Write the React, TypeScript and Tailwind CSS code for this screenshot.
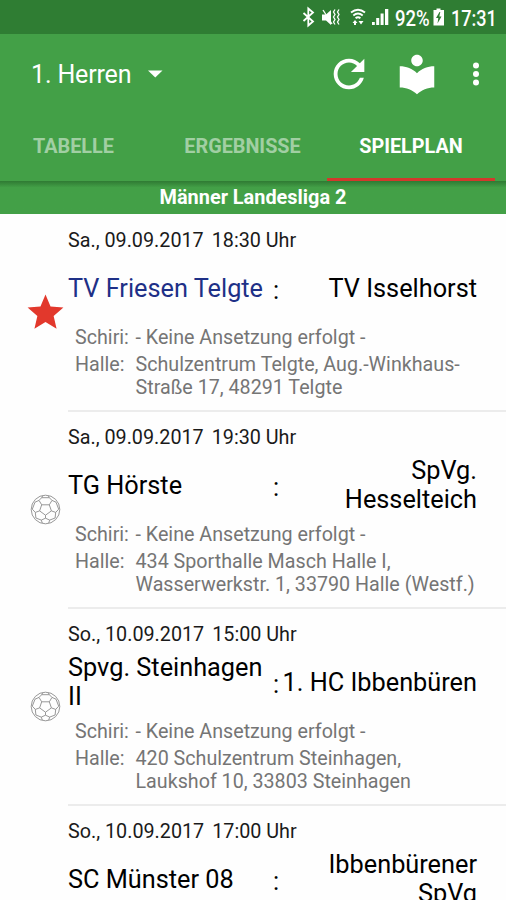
type Match = {
  date: string;
  time: string;
  home: string;
  away: string;
  hall?: string[];
  favorite?: boolean;
};

const matches: Match[] = [
  {
    date: "Sa., 09.09.2017",
    time: "18:30 Uhr",
    home: "TV Friesen Telgte",
    away: "TV Isselhorst",
    hall: ["Schulzentrum Telgte, Aug.-Winkhaus-", "Straße 17, 48291 Telgte"],
    favorite: true,
  },
  {
    date: "Sa., 09.09.2017",
    time: "19:30 Uhr",
    home: "TG Hörste",
    away: "SpVg. Hesselteich",
    hall: ["434 Sporthalle Masch Halle I,", "Wasserwerkstr. 1, 33790 Halle (Westf.)"],
  },
  {
    date: "So., 10.09.2017",
    time: "15:00 Uhr",
    home: "Spvg. Steinhagen II",
    away: "1. HC Ibbenbüren",
    hall: ["420 Schulzentrum Steinhagen,", "Laukshof 10, 33803 Steinhagen"],
  },
  {
    date: "So., 10.09.2017",
    time: "17:00 Uhr",
    home: "SC Münster 08",
    away: "Ibbenbürener SpVg",
  },
];

function Star() {
  return (
    <svg className="size-[43px] shrink-0" viewBox="0 0 24 24" fill="#e2382c">
      <path d="M12 17.27 18.18 21l-1.64-7.03L22 9.24l-7.19-.61L12 2 9.19 8.63 2 9.24l5.46 4.73L5.82 21z" />
    </svg>
  );
}

function Ball() {
  return (
    <svg className="size-[31px] shrink-0" viewBox="0 0 31 31" fill="none" stroke="#8c8c8c" strokeWidth="0.9">
      <circle cx="15.5" cy="15.5" r="14.3" />
      <path d="M11.7 10.8h7.6l2.1 6.1-5.9 4.3-5.9-4.3z" />
      <path d="M11.7 10.8 9 6.4l2.7-2.7h7.6L22 6.4l-2.7 4.4M9 6.4 5 8.2M22 6.4l4 1.8M9.600 16.900l-4.300 1.500-3-3.200L5 8.200M21.400 16.900l4.300 1.500 3-3.200L26 8.200M5.300 18.400l.6 5.600 5.400 2.100 4.200-1.900 4.200 1.900 5.400-2.100.6-5.600M15.500 21.200v3M11.300 26.100l1 3M19.700 26.100l-1 3M11.700 3.700l1-2M19.300 3.700l-1-2" />
    </svg>
  );
}

function StatusBar() {
  return (
    <div className="flex h-[34px] items-center bg-[#2f7d33] pl-[302px] text-white">
      <svg className="h-[36px] w-[93px] shrink-0" viewBox="302 0 93 36" fill="none" stroke="#fff">
        <path d="M303.500 14l9.500 8.500-4.700 4v-17l4.700 4-9.500 8.500" strokeWidth="1.800" />
        <path d="M322 15.500h4l5-4.500v15l-5-4.500h-4z" fill="#fff" stroke="none" />
        <path d="M323 11l9 14" strokeWidth="1.300" />
        <path d="M335 10.500l-1.500 2.500 1.500 2.500-1.500 2.500 1.500 2.500-1.500 2.500 1.500 2.500M339 10.500l-1.500 2.500 1.500 2.500-1.500 2.500 1.500 2.500-1.500 2.500 1.500 2.500" strokeWidth="1.300" />
        <path d="M351 13.500q7-5.500 14 0M353.300 16.500q4.700-3.800 9.400 0M355.600 19.300q2.400-2 4.800 0" strokeWidth="1.900" />
        <path d="M352.500 24l2.500-3 2.500 3zM358.500 22l2.500 3.500 2.500-3.500zM354 24h2v2h-2z" fill="#fff" stroke="none" />
        <path d="M372 26v-3h2.800v3zM376.200 26v-7h3v7zM380.600 26V14.500h3V26zM385 26V10h3.300v16z" fill="#fff" stroke="none" />
      </svg>
      <span className="mt-[4px] w-[38px] origin-left scale-x-[0.86] whitespace-nowrap text-[21.500px] font-medium leading-[36px]">92%</span>
      <svg className="h-[36px] w-[12px] shrink-0" viewBox="433 0 12 36">
        <path d="M433.500 11h3V9.500h4V11h3.500v15.500h-10.500z" fill="#fff" />
        <path d="M439.500 13l-3.500 6h2.300l-.8 5.500 4-7h-2.200l1-4.500z" fill="#2f7d33" />
      </svg>
      <span className="ml-[6px] mt-[4px] origin-left scale-x-[0.84] whitespace-nowrap text-[21.500px] font-medium leading-[36px]">17:31</span>
    </div>
  );
}

function AppBar() {
  return (
    <header className="bg-[#43a047] text-white">
      <div className="flex h-[79px] items-center pl-[31px] pr-[10px]">
        <span className="w-[101px] whitespace-nowrap pt-[3px] text-[25px] tracking-[-0.15px]">1. Herren</span>
        <svg className="ml-[16px] mt-[1px] h-[8px] w-[15px]" viewBox="0 0 15 8" fill="#fff">
          <path d="M0 .5h14.500L7.250 7.500z" />
        </svg>
        <svg className="ml-auto mt-[1px] size-[46px]" viewBox="0 0 24 24" fill="#fff">
          <path d="M17.650 6.350C16.200 4.900 14.210 4 12 4c-4.420 0-7.990 3.580-7.990 8s3.570 8 7.990 8c3.730 0 6.840-2.550 7.730-6h-2.080c-.82 2.330-3.040 4-5.650 4-3.310 0-6-2.690-6-6s2.690-6 6-6c1.660 0 3.140.69 4.220 1.780L13 11h7V4l-2.350 2.350z" />
        </svg>
        <svg className="ml-[22px] size-[46px]" viewBox="0 0 24 24" fill="#fff">
          <path d="M12 11.550C9.640 9.350 6.480 8 3 8v11c3.480 0 6.640 1.350 9 3.550 2.360-2.190 5.520-3.550 9-3.550V8c-3.480 0-6.640 1.350-9 3.550zM12 8c1.660 0 3-1.340 3-3s-1.340-3-3-3-3 1.340-3 3 1.340 3 3 3z" />
        </svg>
        <svg className="ml-[16px] h-[30px] w-[40px]" viewBox="0 0 40 30" fill="#fff">
          <circle cx="20" cy="6.500" r="3" />
          <circle cx="20" cy="15" r="3" />
          <circle cx="20" cy="23.500" r="3" />
        </svg>
      </div>
      <nav className="flex h-[68px] pr-[11px] text-[19.800px] font-bold leading-[68px]">
        <span className="w-[147px] text-center text-white/50">TABELLE</span>
        <span className="w-[180px] pl-[11px] text-center text-white/50">ERGEBNISSE</span>
        <span className="h-[68px] w-[168px] border-b-[3px] border-[#d2392c] text-center">SPIELPLAN</span>
      </nav>
    </header>
  );
}

function MatchRow({ match }: { match: Match }) {
  return (
    <li className="flex h-[197px] shrink-0">
      <div className="flex w-[68px] shrink-0 items-center pl-[23px]">
        {match.hall && (
          <div className="flex w-[45px] justify-center">{match.favorite ? <Star /> : <Ball />}</div>
        )}
      </div>
      <div className="flex min-w-0 flex-1 flex-col pt-[14px] text-black">
        <div className="flex h-[26px] gap-[8px] whitespace-nowrap text-[19.750px] leading-[26px] text-[#1a1a1a]">
          <span>{match.date}</span>
          <span>{match.time}</span>
        </div>
        <div className="mt-[4px] flex h-[60px] items-center text-[25.300px] leading-[29px]">
          <div className={match.favorite ? "w-[202px] whitespace-nowrap text-[#1e3087]" : "w-[202px]"}>{match.home}</div>
          <div className="w-[12px] pt-[4px] text-center">:</div>
          <div className="w-[195px] text-right">{match.away}</div>
        </div>
        {match.hall && (
          <div className="mt-[8px] flex flex-col gap-[4px] whitespace-nowrap pl-[7px] text-[19.700px] leading-[23px] text-[#757575]">
            <div className="flex">
              <span className="w-[60.500px]">Schiri:</span>
              <span>- Keine Ansetzung erfolgt -</span>
            </div>
            <div className="flex">
              <span className="w-[60.500px]">Halle:</span>
              <div>
                {match.hall.map((line) => (
                  <div key={line}>{line}</div>
                ))}
              </div>
            </div>
          </div>
        )}
        <div className="mt-auto h-[2px] translate-y-[1px] bg-[#ececec]" />
      </div>
    </li>
  );
}

export default function App() {
  return (
    <div className="flex h-[900px] w-[506px] flex-col overflow-hidden bg-[#fefefe] font-[Roboto,sans-serif]">
      <StatusBar />
      <AppBar />
      <div className="h-[33px] shrink-0 bg-[#43a047] bg-linear-to-b from-[#2f7a33] to-[#43a047] to-[20%] text-center text-[19.900px] font-bold leading-[34px] text-white">
        Männer Landesliga 2
      </div>
      <ul className="flex min-h-0 flex-1 flex-col overflow-hidden">
        {matches.map((m) => (
          <MatchRow key={m.date + m.time} match={m} />
        ))}
      </ul>
    </div>
  );
}
